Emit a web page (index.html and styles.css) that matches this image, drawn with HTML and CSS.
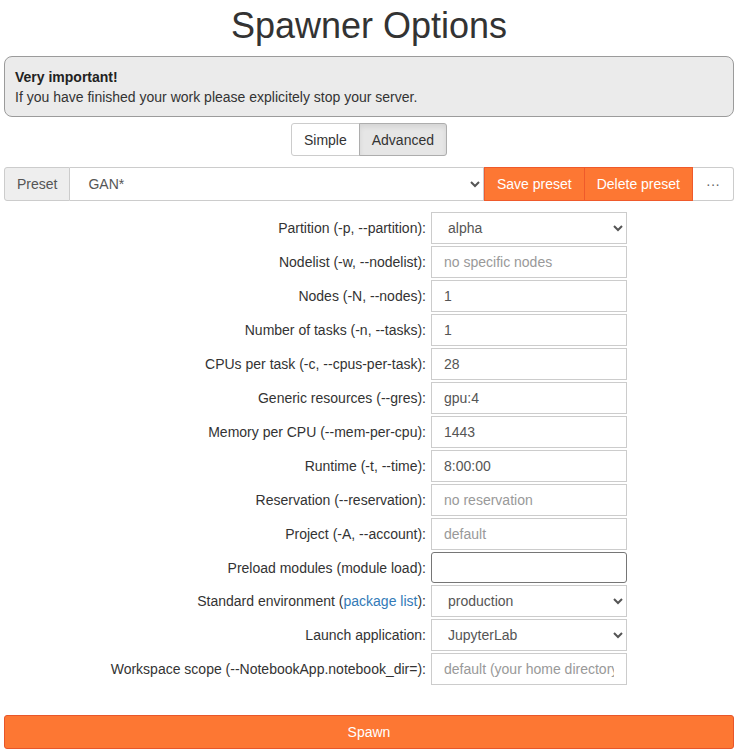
FILE: index.html
```html
<!DOCTYPE html>
<html>
<head>
<meta charset="utf-8">
<title>Spawner Options</title>
<link rel="stylesheet" href="styles.css">
</head>
<body>
<div class="page">
  <h1 class="title">Spawner Options</h1>
  <div class="alert">
    <strong>Very important!</strong><br>
    If you have finished your work please explicitely stop your server.
  </div>
  <div class="toggle-wrap">
    <div class="toggle">
      <button class="tbtn">Simple</button>
      <button class="tbtn active">Advanced</button>
    </div>
  </div>
  <div class="preset">
    <span class="addon">Preset</span>
    <select class="preset-select"><option>GAN*</option></select>
    <button class="obtn">Save preset</button>
    <button class="obtn">Delete preset</button>
    <button class="more">&middot;&middot;&middot;</button>
  </div>
  <div class="form">
    <label class="lbl">Partition (-p, --partition):</label>
    <select class="ctl"><option>alpha</option></select>

    <label class="lbl">Nodelist (-w, --nodelist):</label>
    <input class="ctl" placeholder="no specific nodes">

    <label class="lbl">Nodes (-N, --nodes):</label>
    <input class="ctl" value="1">

    <label class="lbl">Number of tasks (-n, --tasks):</label>
    <input class="ctl" value="1">

    <label class="lbl">CPUs per task (-c, --cpus-per-task):</label>
    <input class="ctl" value="28">

    <label class="lbl">Generic resources (--gres):</label>
    <input class="ctl" value="gpu:4">

    <label class="lbl">Memory per CPU (--mem-per-cpu):</label>
    <input class="ctl" value="1443">

    <label class="lbl">Runtime (-t, --time):</label>
    <input class="ctl" value="8:00:00">

    <label class="lbl">Reservation (--reservation):</label>
    <input class="ctl" placeholder="no reservation">

    <label class="lbl">Project (-A, --account):</label>
    <input class="ctl" placeholder="default">

    <label class="lbl">Preload modules (module load):</label>
    <input class="ctl plain">

    <label class="lbl">Standard environment (<a href="#" class="link">package list</a>):</label>
    <select class="ctl"><option>production</option></select>

    <label class="lbl">Launch application:</label>
    <select class="ctl"><option>JupyterLab</option></select>

    <label class="lbl">Workspace scope (--NotebookApp.notebook_dir=):</label>
    <input class="ctl" placeholder="default (your home directory)">
  </div>
  <button class="spawn">Spawn</button>
</div>
</body>
</html>
```
FILE: styles.css
```css
* { box-sizing: border-box; }
html, body { margin: 0; padding: 0; background: #fff; }
body {
  font-family: "Liberation Sans", Arial, sans-serif;
  font-size: 14px;
  line-height: 20px;
  color: #333;
}
.page { padding: 0 5px 0 4px; }
.title {
  margin: 6px 0 0;
  font-size: 36px;
  line-height: 40px;
  font-weight: normal;
  text-align: center;
  color: #333;
}
.alert {
  margin-top: 10px;
  border: 1px solid #9b9b9b;
  border-radius: 8px;
  background: #ebebeb;
  padding: 10px 10px 9px;
  color: #333;
}
.alert strong { font-weight: bold; color: #222; }
.toggle-wrap { display: flex; justify-content: center; margin-top: 6px; }
.toggle { display: flex; }
.tbtn {
  font: inherit;
  color: #333;
  background: #fff;
  border: 1px solid #ccc;
  padding: 6px 12px;
  height: 33px;
  margin: 0;
}
.tbtn:first-child { border-radius: 3px 0 0 3px; }
.tbtn:last-child { border-radius: 0 3px 3px 0; margin-left: -1px; }
.tbtn.active { background: #e6e6e6; border-color: #adadad; box-shadow: inset 0 3px 5px rgba(0,0,0,.08); }
.preset {
  display: flex;
  margin-top: 11px;
  height: 34px;
}
.addon {
  display: flex;
  align-items: center;
  padding: 0 12px;
  background: #eee;
  border: 1px solid #ccc;
  border-radius: 3px 0 0 3px;
  color: #555;
}
.preset-select {
  flex: 1;
  font: inherit;
  color: #555;
  background: #fff;
  border: 1px solid #ccc;
  border-left: 0;
  padding: 0 10px 0 14px;
  height: 34px;
  margin: 0;
  border-radius: 0;
}
.obtn {
  font: inherit;
  color: #fff;
  background: #fd7733;
  border: 1px solid #ef5a2b;
  padding: 0 12px;
  height: 34px;
  margin: 0;
  border-radius: 0;
}
.obtn + .obtn { margin-left: -1px; }
.more {
  font: inherit;
  color: #666;
  background: #fff;
  border: 1px solid #ccc;
  border-left: 0;
  border-radius: 0 3px 3px 0;
  width: 41px;
  height: 34px;
  margin: 0;
  padding: 0;
  letter-spacing: 0;
}
.form {
  display: grid;
  grid-template-columns: 422px 196px;
  column-gap: 5px;
  row-gap: 2px;
  margin-top: 11px;
  align-items: center;
}
.lbl { text-align: right; white-space: nowrap; color: #333; }
.link { color: #337ab7; text-decoration: none; }
.ctl {
  font: inherit;
  color: #555;
  background: #fff;
  border: 1px solid #ccc;
  border-radius: 0;
  height: 32px;
  width: 196px;
  padding: 0 12px;
  margin: 0;
}
select.ctl { padding: 0 8px 0 12px; }
.ctl::placeholder { color: #999; }
.ctl.plain { border: 1px solid #767676; border-radius: 3px; height: 31px; }
.spawn {
  display: block;
  width: 100%;
  margin-top: 30px;
  height: 34px;
  font: inherit;
  color: #fff;
  background: #fd7733;
  border: 1px solid #e8562a;
  border-radius: 3px;
}
```
